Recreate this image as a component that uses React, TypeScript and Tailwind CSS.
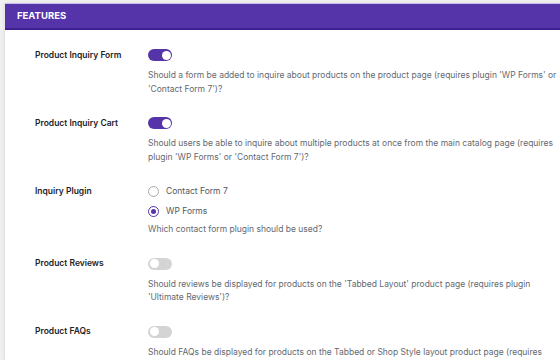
import React, { useState } from "react";

type Option = { label: string; value: string };

function Toggle({ on, onChange }: { on: boolean; onChange: () => void }) {
  return (
    <button
      type="button"
      onClick={onChange}
      className={`relative flex h-[12px] w-[24px] items-center rounded-full px-[1.5px] ${
        on ? "justify-end bg-[#5533a8]" : "justify-start bg-[#d4d4d4]"
      }`}
    >
      <span className="block h-[9px] w-[9px] rounded-full bg-white" />
    </button>
  );
}

function Radio({
  checked,
  label,
  onSelect,
}: {
  checked: boolean;
  label: string;
  onSelect: () => void;
}) {
  return (
    <label onClick={onSelect} className="flex h-[20px] cursor-pointer items-center gap-[7px]">
      <span
        className={`flex h-[11px] w-[11px] items-center justify-center rounded-full border ${
          checked ? "border-[#5533a8]" : "border-[#a7aaad]"
        }`}
      >
        {checked && <span className="block h-[5px] w-[5px] rounded-full bg-[#5533a8]" />}
      </span>
      <span className="text-[#50575e]">{label}</span>
    </label>
  );
}

function Row({
  label,
  children,
  description,
  tight = false,
}: {
  label: string;
  children: React.ReactNode;
  description: React.ReactNode;
  tight?: boolean;
}) {
  return (
    <div className="flex">
      <div className="w-[143px] shrink-0 pl-[30px]">
        <div className="flex h-[20px] items-center font-semibold text-[#1d2327]">{label}</div>
      </div>
      <div className="flex-1">
        {children}
        <p
          className={`whitespace-nowrap leading-[13.5px] text-[#646970] ${tight ? "mt-[2px]" : "mt-[4px]"}`}
        >
          {description}
        </p>
      </div>
    </div>
  );
}

export default function App() {
  const [form, setForm] = useState(true);
  const [cart, setCart] = useState(true);
  const [reviews, setReviews] = useState(false);
  const [faqs, setFaqs] = useState(false);
  const [plugin, setPlugin] = useState("wp");

  const plugins: Option[] = [
    { label: "Contact Form 7", value: "cf7" },
    { label: "WP Forms", value: "wp" },
  ];

  return (
    <div className="h-[360px] w-[560px] overflow-hidden bg-[#f0f0f1] pt-[3px] pl-[5px] font-['Inter','Noto_Sans',sans-serif] text-[8.5px]">
      <div className="h-full bg-white shadow-[-1px_0_3px_rgba(0,0,0,0.08)]">
        {/* Section header */}
        <div className="flex h-[27px] items-center border-t border-b-2 border-t-[#c9bdf0] border-b-[#3d1f8f] bg-[#5533a8] pl-[12px]">
          <h2 className="text-[9.5px] font-bold text-white">FEATURES</h2>
        </div>

        <div className="flex flex-col gap-[17px] pt-[15px]">
          <Row
            label="Product Inquiry Form"
            description={
              <>
                Should a form be added to inquire about products on the product page (requires plugin 'WP Forms' or
                <br />
                'Contact Form 7')?
              </>
            }
          >
            <div className="flex h-[20px] items-center">
              <Toggle on={form} onChange={() => setForm(!form)} />
            </div>
          </Row>

          <Row
            label="Product Inquiry Cart"
            description={
              <>
                Should users be able to inquire about multiple products at once from the main catalog page (requires
                <br />
                plugin 'WP Forms' or 'Contact Form 7')?
              </>
            }
          >
            <div className="flex h-[20px] items-center">
              <Toggle on={cart} onChange={() => setCart(!cart)} />
            </div>
          </Row>

          <Row label="Inquiry Plugin" description="Which contact form plugin should be used?" tight>
            <div className="flex flex-col">
              {plugins.map((p) => (
                <Radio
                  key={p.value}
                  label={p.label}
                  checked={plugin === p.value}
                  onSelect={() => setPlugin(p.value)}
                />
              ))}
            </div>
          </Row>

          <Row
            label="Product Reviews"
            description={
              <>
                Should reviews be displayed for products on the 'Tabbed Layout' product page (requires plugin
                <br />
                'Ultimate Reviews')?
              </>
            }
          >
            <div className="flex h-[20px] items-center">
              <Toggle on={reviews} onChange={() => setReviews(!reviews)} />
            </div>
          </Row>

          <Row
            label="Product FAQs"
            description={
              <>
                Should FAQs be displayed for products on the Tabbed or Shop Style layout product page (requires
                <br />
                plugin 'Ultimate FAQs')?
              </>
            }
          >
            <div className="flex h-[20px] items-center">
              <Toggle on={faqs} onChange={() => setFaqs(!faqs)} />
            </div>
          </Row>
        </div>
      </div>
    </div>
  );
}
